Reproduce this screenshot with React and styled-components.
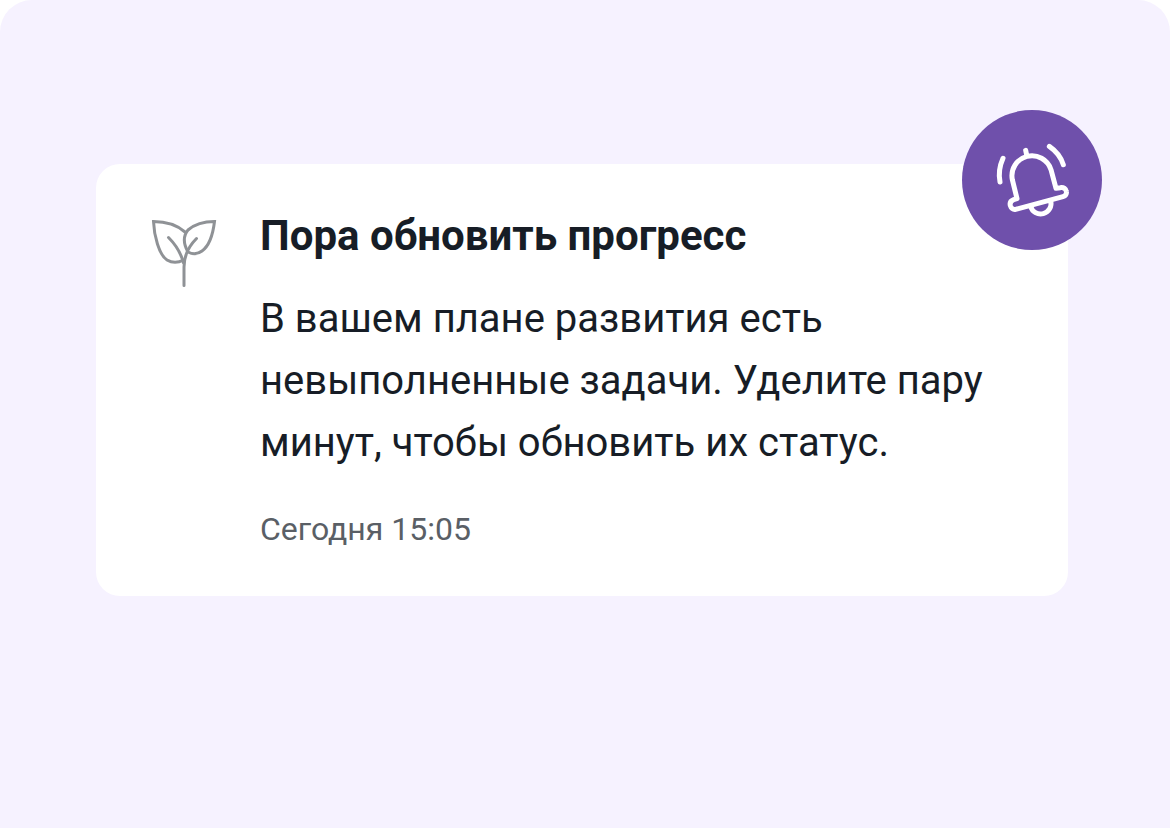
import React from "react";
import styled, { createGlobalStyle } from "styled-components";

const GlobalStyle = createGlobalStyle`
  *, *::before, *::after { box-sizing: border-box; }
  body {
    margin: 0;
    background: #ffffff;
    font-family: Roboto, "Liberation Sans", sans-serif;
  }
`;

const Page = styled.main`
  min-height: 100vh;
  padding: 164px 102px 96px 96px;
  border-radius: 32px 32px 0 0;
  background: #f6f2ff;
`;

const Card = styled.article`
  position: relative;
  display: flex;
  gap: 36px;
  padding: 48px;
  border-radius: 24px;
  background: #ffffff;
`;

const LeafIcon = styled.svg`
  flex: none;
  width: 80px;
  height: 80px;
  fill: none;
  stroke: #8f9296;
  stroke-width: 3;
  stroke-linecap: round;
`;

const Content = styled.div`
  flex: 1;
  min-width: 0;
`;

const Title = styled.h1`
  margin: 0 0 28px;
  color: #171d26;
  font-size: 42px;
  font-weight: 700;
  line-height: 48px;
`;

const Message = styled.p`
  margin: 0 0 36px;
  color: #171d26;
  font-size: 40px;
  line-height: 62px;
`;

const Timestamp = styled.time`
  display: block;
  color: #5a5f66;
  font-size: 32px;
  line-height: 38px;
`;

const Badge = styled.div`
  position: absolute;
  top: -54px;
  right: -34px;
  display: grid;
  place-items: center;
  width: 140px;
  height: 140px;
  border-radius: 50%;
  background: #6f50ab;
`;

const BellIcon = styled.svg`
  width: 94px;
  height: 94px;
  fill: none;
  stroke: #ffffff;
  stroke-width: 15;
  stroke-linecap: round;
  stroke-linejoin: round;
`;

export default function App() {
  return (
    <>
      <GlobalStyle />
      <Page>
        <Card>
          <LeafIcon viewBox="144 212 80 80" aria-hidden="true">
            <path d="M185 232C177 225 166 221.500 153.500 221.500C154 235 159 255 167 260C172 263 178 263 183.500 260" />
            <path d="M188 252C183 243 183 236 188 230C195 224 205 221.500 214.500 221.500C213 234 209 246 202 251C198 254 193 254.500 188 252" />
            <path d="M168.500 237.500C174 243 181 253 183.500 263" />
            <path d="M196.500 238.500C188 247 184 256 184 267V285.500" />
          </LeafIcon>
          <Content>
            <Title>Пора обновить прогресс</Title>
            <Message>
              В вашем плане развития есть невыполненные задачи. Уделите пару
              минут, чтобы обновить их статус.
            </Message>
            <Timestamp dateTime="15:05">Сегодня 15:05</Timestamp>
          </Content>
          <Badge>
            <BellIcon viewBox="0 0 282 282" aria-hidden="true">
              <path d="M96 197L82 140A60 60 0 0 1 198 110L213 166L226 164C236 162 243 168 244 175C246 183 241 189 234 191L92 229C84 231 78 225 76 218C74 210 78 203 86 200Z" />
              <path d="M122 52L125 66" />
              <path d="M137 220A31 31 0 0 0 197 204" />
              <path d="M54 76Q38 112 45 147" />
              <path d="M193 40Q225 62 235 95" />
            </BellIcon>
          </Badge>
        </Card>
      </Page>
    </>
  );
}
